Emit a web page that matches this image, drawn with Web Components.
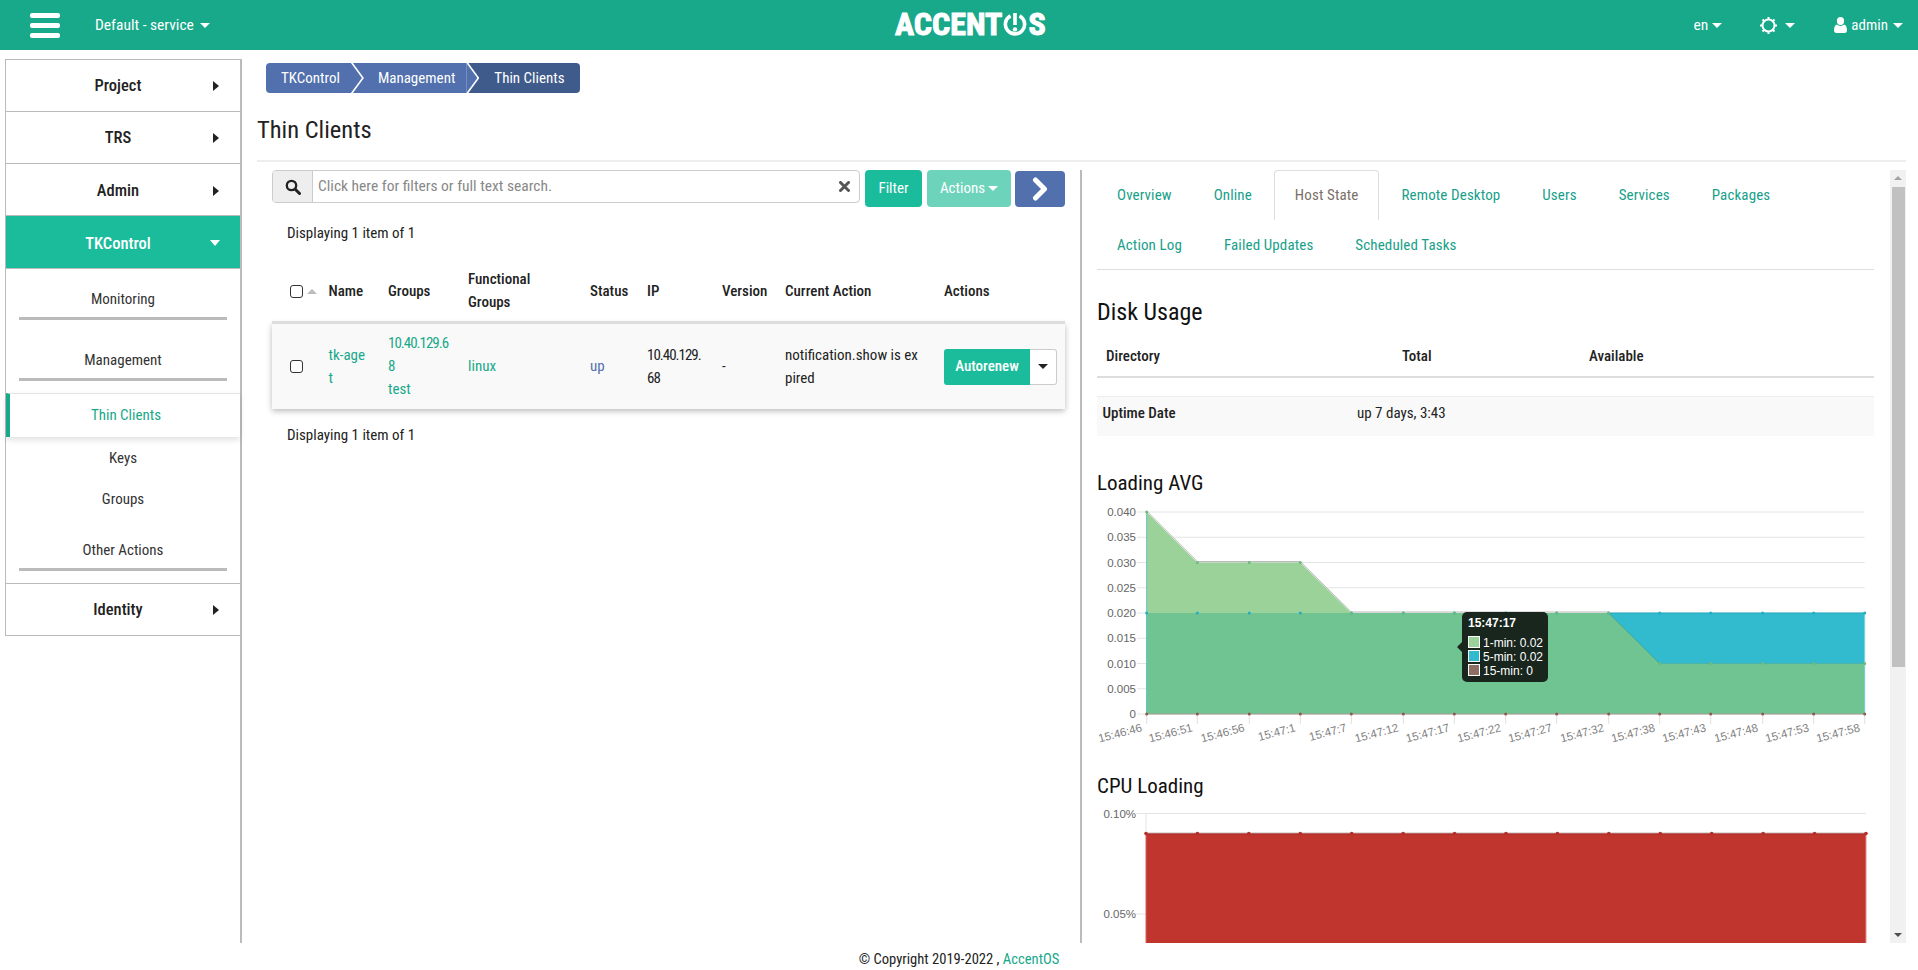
<!doctype html>
<html lang="en"><head><meta charset="utf-8"><title>Thin Clients</title>
<style>
html,body{margin:0;padding:0;height:970px;overflow:hidden;background:#fff}
body{font:15px/23px "Roboto Condensed","Liberation Sans",sans-serif;color:#222;display:flex;flex-direction:column}
</style></head>
<body>
<x-topbar></x-topbar>
<x-shell>
  <x-sidenav>
    <x-nav-item>Project</x-nav-item>
    <x-nav-item>TRS</x-nav-item>
    <x-nav-item low>Admin</x-nav-item>
    <x-nav-item low open>TKControl</x-nav-item>
    <x-nav-head>Monitoring</x-nav-head>
    <x-nav-head>Management</x-nav-head>
    <x-nav-link active>Thin Clients</x-nav-link>
    <x-nav-link h="42">Keys</x-nav-link>
    <x-nav-link h="41">Groups</x-nav-link>
    <x-nav-head>Other Actions</x-nav-head>
    <x-nav-item last>Identity</x-nav-item>
  </x-sidenav>
  <x-content>
    <x-breadcrumb>
      <x-crumb>TKControl</x-crumb><x-crumb mid>Management</x-crumb><x-crumb end>Thin Clients</x-crumb>
    </x-breadcrumb>
    <x-page-title>Thin Clients</x-page-title>
    <x-split>
      <x-left-panel>
        <x-toolbar></x-toolbar>
        <x-count>Displaying 1 item of 1</x-count>
        <x-clients-table></x-clients-table>
        <x-count after>Displaying 1 item of 1</x-count>
      </x-left-panel>
      <x-right-panel>
        <x-tabs></x-tabs>
        <x-disk-usage></x-disk-usage>
        <x-section-title>Loading AVG</x-section-title>
        <x-load-chart></x-load-chart>
        <x-section-title cpu>CPU Loading</x-section-title>
        <x-cpu-chart></x-cpu-chart>
      </x-right-panel>
      <x-scrolltrack></x-scrolltrack>
    </x-split>
  </x-content>
</x-shell>
<x-footer></x-footer>
<script>
const def=(name,html)=>customElements.define(name,class extends HTMLElement{constructor(){super();this.attachShadow({mode:'open'}).innerHTML=html}});
const caret=(c='#fff')=>`<i style="display:inline-block;width:0;height:0;border:5px solid transparent;border-top:5.5px solid ${c};border-bottom:0;vertical-align:middle"></i>`;

def('x-topbar',`<style>
:host{display:flex;align-items:center;height:50px;background:#18a88a;color:#fff;flex:none;position:relative}
.burger{margin-left:30px;width:30px;display:flex;flex-direction:column;gap:5px}
.burger b{display:block;height:5px;background:#fff;border-radius:2px}
.proj{margin-left:35px;display:flex;align-items:center;gap:6px;font-size:15.5px;width:auto}
.logo{position:absolute;left:895px;top:12px;height:24px;display:flex;align-items:center;font:700 32px/24px "Roboto Condensed",sans-serif;-webkit-text-stroke:1px #fff;color:#fff}
.logo svg{margin:0 1px 0 1px}
.right{margin-left:auto;display:flex;align-items:center;font-size:15.5px}
.en{display:flex;align-items:center;gap:4px}
.gear{display:flex;align-items:center;gap:8px;margin-left:37.7px}
.user{display:flex;align-items:center;margin-left:39.5px;margin-right:15px;font-size:15px}
.user svg{margin-right:4px}.user i{margin-left:5px}
</style>
<div class="burger"><b></b><b></b><b></b></div>
<div class="proj">Default - service ${caret()}</div>
<div class="logo">ACCENT<svg width="24" height="24" viewBox="0 0 24 24"><path d="M7.5 3.8A9.6 9.6 0 1 0 16.5 3.8" fill="none" stroke="#fff" stroke-width="3.6"/><rect x="10.2" y="1" width="3.6" height="12" fill="#fff"/><circle cx="12" cy="17.4" r="2.2" fill="#fff"/></svg>S</div>
<div class="right">
<div class="en">en${caret()}</div>
<div class="gear"><svg width="17" height="17" viewBox="0 0 17 17" fill="none" stroke="#fff"><circle cx="8.5" cy="8.5" r="6" stroke-width="2"/><g stroke-width="2"><path d="M8.5 0v2.5M8.5 14.5V17M0 8.5h2.5M14.5 8.5H17M2.5 2.5l1.8 1.8M12.7 12.7l1.8 1.8M14.5 2.5l-1.8 1.8M4.3 12.7l-1.8 1.8"/></g></svg>${caret()}</div>
<div class="user"><svg width="13" height="16" viewBox="0 0 13 16" fill="#fff"><ellipse cx="6.5" cy="4" rx="3.6" ry="4"/><path d="M0 13.2C0 10 1.2 8 3 7.600C4 8.600 5.200 9 6.500 9S9 8.600 10 7.600C11.800 8 13 10 13 13.200 13 15 12 16 10.800 16H2.200C1 16 0 15 0 13.200Z"/></svg>admin${caret()}</div>
</div>`);

def('x-shell',`<style>:host{display:flex;height:893px;flex:none;overflow:hidden}</style><slot></slot>`);

def('x-sidenav',`<style>
:host{display:block;flex:none;width:237px;margin:9px 0 0 5px;box-sizing:border-box;border-right:2px solid #bbb}
.box{border-left:1px solid #bbb;border-top:1px solid #bbb;border-bottom:1px solid #bbb}
</style><div class="box"><slot></slot></div>`);

customElements.define('x-nav-item',class extends HTMLElement{constructor(){super();
 const open=this.hasAttribute('open'),last=this.hasAttribute('last'),low=this.hasAttribute('low');
 this.attachShadow({mode:'open'}).innerHTML=`<style>
 :host{display:grid;height:${open?53:52}px;box-sizing:border-box;${last?'margin-top:2px;border-top:1px solid #bbb;':'border-bottom:1px solid #bbb;'}align-items:center;padding-right:10px;${low?'padding-top:2px;':''}
  font-size:16.5px;font-weight:500;color:${open?'#fff':'#222'};background:${open?'#1abc9c':'#fff'}}
 span{grid-area:1/1;justify-self:center}
 i{grid-area:1/1;justify-self:end;width:0;height:0;border:solid transparent;
  ${open?'border-width:6px 5px 0;border-top-color:#fff;margin-right:10px':'border-width:5px 0 5px 6px;border-left-color:#222;margin-right:11px'}}
 </style><span><slot></slot></span><i></i>`}});

def('x-nav-head',`<style>
:host{display:block;padding-top:19px;height:42px;text-align:center;color:#333;font-size:15px;line-height:22px}
hr{margin:7px 13px 0;border:0;height:3px;background:#bbb}
</style><slot></slot><hr>`);

customElements.define('x-nav-link',class extends HTMLElement{constructor(){super();
 const a=this.hasAttribute('active'),h=this.getAttribute('h')||41;
 this.attachShadow({mode:'open'}).innerHTML=`<style>
 :host{display:flex;align-items:center;justify-content:center;text-align:center;font-size:15px;box-sizing:border-box;
 ${a?`height:44px;margin-top:2px;padding-left:2px;border-left:4px solid #18a88a;border-top:1px solid #e4e4e4;color:#18a88a;box-shadow:0 3px 6px rgba(0,0,0,.12);background:#fff;position:relative`:`height:${h}px;color:#333`}}
 </style><slot></slot>`}});

def('x-content',`<style>:host{display:flex;flex-direction:column;flex:1;min-width:0;padding:0 12px 0 15px;box-sizing:border-box}</style><slot></slot>`);

def('x-breadcrumb',`<style>:host{display:flex;margin:13px 0 0 9px;height:30px;flex:none}</style><slot></slot>`);
customElements.define('x-crumb',class extends HTMLElement{constructor(){super();
 const mid=this.hasAttribute('mid'),end=this.hasAttribute('end');
 const bg=end?'#3f5b8b':'#5170ad';
 this.attachShadow({mode:'open'}).innerHTML=`<style>
 :host{display:block;position:relative;height:30px;line-height:30px;color:#fff;font-size:15px;background:${bg};
  z-index:${end?1:mid?2:3};
  ${end?'padding:0 15px 0 28px;border-radius:0 4px 4px 0':mid?'padding:0 11px 0 27px':'padding:0 11px 0 15px;border-radius:4px 0 0 4px'}}
 ${end?'':`:host::before{content:"";position:absolute;top:0;left:100%;width:13px;height:30px;background:#fff;clip-path:polygon(0 0,2px 0,100% 50%,2px 100%,0 100%)}
 :host::after{content:"";position:absolute;top:0;left:100%;width:11px;height:30px;background:${bg};clip-path:polygon(0 0,100% 50%,0 100%)}`}
 </style><slot></slot>`}});

def('x-page-title',`<style>:host{display:block;flex:none;margin-top:23px;height:44px;border-bottom:2px solid #eee;font-size:24.5px;line-height:28px}</style><slot></slot>`);

def('x-split',`<style>:host{display:flex;flex:none;height:773px;margin-top:8px;overflow:hidden}</style><slot></slot>`);

def('x-left-panel',`<style>:host{display:block;flex:none;width:825px;box-sizing:border-box;padding-left:15px;border-right:2px solid #bbb}</style><slot></slot>`);

def('x-toolbar',`<style>
:host{display:flex;align-items:flex-start;width:793px}
.search{display:flex;width:588px;height:33px;box-sizing:border-box;border:1px solid #ccc;border-radius:4px;background:#fff;overflow:hidden}
.ic{width:39px;background:#eee;border-right:1px solid #ccc;display:flex;align-items:center;justify-content:center;flex:none}
.ph{flex:1;color:#888;font-size:15.500px;line-height:31px;padding-left:5px}
.x{display:flex;align-items:center;margin-right:9px}
button{all:unset;box-sizing:border-box;height:37px;border-radius:4px;color:#fff;font-size:15px;display:flex;align-items:center;justify-content:center}
.f{width:57px;margin-left:5px;background:#1abc9c}
.a{width:84px;margin-left:5px;background:#6dd4bb;gap:3px}
.n{width:50px;margin-left:4px;background:#5170ad;margin-top:1px;height:36px}
</style>
<div class="search"><div class="ic"><svg width="16" height="16" viewBox="0 0 16 16" fill="none" stroke="#222"><circle cx="6.500" cy="6.500" r="4.700" stroke-width="2.300"/><path d="M10 10l4.500 4.500" stroke-width="3" stroke-linecap="round"/></svg></div><div class="ph">Click here for filters or full text search.</div><div class="x"><svg width="11" height="11" viewBox="0 0 11 11"><path d="M1.500 1.500l8 8M9.500 1.500l-8 8" stroke="#555" stroke-width="3" stroke-linecap="round"/></svg></div></div>
<button class="f">Filter</button><button class="a">Actions ${caret()}</button>
<button class="n"><svg width="16" height="24" viewBox="0 0 16 24"><path d="M3.500 3l9 9-9 9" fill="none" stroke="#fff" stroke-width="5" stroke-linejoin="round" stroke-linecap="round"/></svg></button>`);

customElements.define('x-count',class extends HTMLElement{constructor(){super();
 this.attachShadow({mode:'open'}).innerHTML=`<style>:host{display:block;margin:15px 0 16px 15px;line-height:22px;color:#222}</style><slot></slot>`}});

def('x-clients-table',`<style>
:host{display:block;width:793px}
table{border-collapse:collapse;table-layout:fixed;width:793px}
th,td{padding:8px;text-align:left;vertical-align:middle;line-height:23px;font-size:15px;word-break:break-all}
th{font-weight:500;word-break:normal;color:#222;padding-bottom:7px}
thead tr{border-bottom:3px solid #ddd}
tbody tr{background:#f9f9f9;box-shadow:0 2px 6px rgba(0,0,0,.28)}
a{color:#18a88a}.up{color:#5170ad}.ip{letter-spacing:-1px}
.box{appearance:none;display:block;margin:0;width:13px;height:13px;border:1.500px solid #333;border-radius:3px;background:#fff;box-sizing:border-box}
.hc{display:flex;align-items:center;gap:4px;padding-left:10px}
.sort{width:0;height:0;border:5px solid transparent;border-bottom:5px solid #bbb;border-top:0}
.btn{display:flex;height:36px}
.auto{width:86px;background:#1abc9c;color:#fff;border-radius:3px 0 0 3px;display:flex;align-items:center;justify-content:center;font-weight:500}
.dd{width:27px;box-sizing:border-box;border:1px solid #ccc;border-left:0;border-radius:0 3px 3px 0;background:#fff;display:flex;align-items:center;justify-content:center}
</style>
<table><colgroup><col style="width:48.500px"><col style="width:59.500px"><col style="width:80px"><col style="width:122px"><col style="width:57px"><col style="width:75px"><col style="width:63px"><col style="width:159px"><col style="width:129px"></colgroup>
<thead><tr><th style="padding:8px 0 7px"><div class="hc"><input class="box" type="checkbox" style="margin-left:8px"><span class="sort"></span></div></th><th>Name</th><th>Groups</th><th>Functional Groups</th><th>Status</th><th>IP</th><th>Version</th><th>Current Action</th><th>Actions</th></tr></thead>
<tbody><tr><td style="padding:8px 0 8px 18px"><input class="box" type="checkbox"></td><td style="padding-right:13px"><a>tk-aget</a></td><td><a class="ip">10.40.129.68</a><br><a>test</a></td><td><a>linux</a></td><td><span class="up">up</span></td><td class="ip">10.40.129.68</td><td>-</td><td style="padding-right:13px">notification.show is expired</td><td style="padding-right:0"><div class="btn"><div class="auto">Autorenew</div><div class="dd">${caret('#222')}</div></div></td></tr></tbody></table>`);

def('x-right-panel',`<style>:host{display:block;flex:none;width:808px;box-sizing:border-box;padding-left:15px;height:773px;overflow:hidden}</style><slot></slot>`);

def('x-tabs',`<style>
:host{display:flex;flex-wrap:wrap;width:777px;height:99px;border-bottom:1px solid #ddd;box-sizing:content-box;font-size:15px;letter-spacing:.12px}
span{display:flex;align-items:center;height:50px;padding:0 20px;margin-right:2px;color:#18a08a;box-sizing:border-box;white-space:nowrap}
.on{color:#7a6f68;border:1px solid #ddd;border-bottom:0;border-radius:4px 4px 0 0;margin-right:2px}
.br{flex-basis:100%;height:0;padding:0;margin:0}
</style><span>Overview</span><span>Online</span><span class="on">Host State</span><span>Remote Desktop</span><span>Users</span><span>Services</span><span>Packages</span><span class="br"></span><span>Action Log</span><span>Failed Updates</span><span>Scheduled Tasks</span>`);

def('x-disk-usage',`<style>
:host{display:block;width:777px}
h2{margin:27px 0 0;font-weight:400;font-size:24px;line-height:30px;color:#111}
.head{display:grid;grid-template-columns:296px 187px 1fr;padding-left:9px;height:32px;padding-bottom:4px;margin-top:13px;align-items:center;font-weight:500;border-bottom:2px solid #ddd}
.row{display:grid;grid-template-columns:254.500px 1fr;padding-left:5.500px;height:40px;padding-bottom:6px;margin-top:18px;align-items:center;background:#f9f9f9;border-top:1px solid #eee;box-sizing:border-box}
b{font-weight:500}
</style><h2>Disk Usage</h2><div class="head"><span>Directory</span><span>Total</span><span>Available</span></div>
<div class="row"><b>Uptime Date</b><span>up 7 days, 3:43</span></div>`);

customElements.define('x-section-title',class extends HTMLElement{constructor(){super();
 const c=this.hasAttribute('cpu');
 this.attachShadow({mode:'open'}).innerHTML=`<style>:host{display:block;margin-top:${c?'0':'34px'};height:26px;font-size:21px;line-height:26px;color:#111}</style><slot></slot>`}});

/* chart helpers: all coordinates are chart-local pixels; X0/Y0 = page position of the svg */
const X0=1097,Y0=496;
const xs=[1146.7,1197.3,1249.3,1300.3,1351.3,1403.3,1454.3,1505.7,1556.7,1608.7,1659.7,1710.7,1762.7,1813.7,1864.7].map(x=>x-X0);
const lbls=['15:46:46','15:46:51','15:46:56','15:47:1','15:47:7','15:47:12','15:47:17','15:47:22','15:47:27','15:47:32','15:47:38','15:47:43','15:47:48','15:47:53','15:47:58'];
const F='font-family="Liberation Sans,Arial,sans-serif" font-size="11.500"';

customElements.define('x-load-chart',class extends HTMLElement{constructor(){super();
 const Y=v=>714-Y0-v*5050;
 const a1=[.04,.03,.03,.03,.02,.02,.02,.02,.02,.02,.01,.01,.01,.01,.01],a5=xs.map(()=>.02);
 const pts=(arr)=>arr.map((v,i)=>xs[i].toFixed(1)+','+Y(v).toFixed(1)).join(' ');
 const base=`${xs[14]},${Y(0)} ${xs[0]},${Y(0)}`;
 let g='';
 ['0.040','0.035','0.030','0.025','0.020','0.015','0.010','0.005','0'].forEach((t,i)=>{const y=Y(.04-i*.005);
  g+=`<line x1="40" x2="${xs[14]}" y1="${y}" y2="${y}" stroke="#e4e4e4" stroke-width="1"/><text x="39" y="${y+4}" text-anchor="end" fill="#666" ${F}>${t}</text>`;});
 let tk='';
 xs.forEach((x,i)=>{tk+=`<line x1="${x}" x2="${x}" y1="${Y(0)}" y2="${Y(0)+10}" stroke="#e0e0e0"/><text transform="translate(${x-4} ${Y(0)+17}) rotate(-15)" text-anchor="end" fill="#808080" ${F}>${lbls[i]}</text>`;});
 const dots=(arr,c)=>arr.map((v,i)=>`<circle cx="${xs[i]}" cy="${Y(v)}" r="1.500" fill="${c}"/>`).join('');
 const tx=1462-X0,ty=612-Y0;
 const sw=(y,c,t)=>`<rect x="${tx+6.500}" y="${y}" width="11" height="11" fill="${c}" stroke="#fff"/><text x="${tx+21}" y="${y+10}" fill="#fff" font-family="Liberation Sans,Arial,sans-serif" font-size="12">${t}</text>`;
 this.attachShadow({mode:'open'}).innerHTML=`<style>:host{display:block;height:277px}svg{display:block}</style>
 <svg width="777" height="277" viewBox="0 0 777 277">${g}
 <polyline points="${pts(a1)}" fill="none" stroke="#bbb" stroke-width="1" transform="translate(0 -1)"/>
 <polygon points="${pts(a1)} ${base}" fill="#9ad29a"/>
 <polygon points="${pts(a5)} ${base}" fill="#32bace"/>
 <polygon points="${pts(a1.map(v=>Math.min(v,.02)))} ${base}" fill="#70c491"/>
 <line x1="${xs[9]}" y1="${Y(.02)}" x2="${xs[10]}" y2="${Y(.01)}" stroke="#3aa9a0" stroke-width="1"/>
 <line x1="${xs[10]}" y1="${Y(.01)}" x2="${xs[14]}" y2="${Y(.01)}" stroke="#4bb3a8" stroke-width="1"/>
 <line x1="${xs[9]}" y1="${Y(.02)}" x2="${xs[14]}" y2="${Y(.02)}" stroke="#26a9bd" stroke-width="1"/>
 <line x1="${xs[0]}" y1="${Y(.04)}" x2="${xs[0]}" y2="${Y(0)}" stroke="#5fc2b8"/>
 <line x1="${xs[14]}" y1="${Y(.02)}" x2="${xs[14]}" y2="${Y(0)}" stroke="#7fd0d8"/>
 <line x1="${xs[0]}" y1="${Y(0)}" x2="${xs[14]}" y2="${Y(0)}" stroke="#a39a90"/>
 ${tk}${dots(a5,'#1fb0c2')}${dots(a1,'#6fba7c')}${dots(xs.map(()=>0),'#8d5a4e')}
 <path d="M${tx} ${ty+30}l-5 5 5 5z" fill="#18261e"/>
 <rect x="${tx}" y="${ty}" width="86" height="70" rx="5" fill="#18261e"/>
 <text x="${tx+6}" y="${ty+15}" fill="#fff" font-family="Liberation Sans,Arial,sans-serif" font-size="12" font-weight="700">15:47:17</text>
 ${sw(ty+24.500,'#9ad29a','1-min: 0.02')}${sw(ty+38.500,'#32bace','5-min: 0.02')}${sw(ty+52.500,'#8d6e63','15-min: 0')}
 </svg>`}});

customElements.define('x-cpu-chart',class extends HTMLElement{constructor(){super();
 const top=834-800,y1=813.500-800,y2=914-800;
 const x0=1146-X0,x1=1866-X0;
 const dx=(x1-x0)/14;
 let d='';for(let i=0;i<15;i++)d+=`<circle cx="${x0+dx*i}" cy="${top-.5}" r="1.800" fill="#b3302a"/>`;
 this.attachShadow({mode:'open'}).innerHTML=`<style>:host{display:block;height:143px;margin-top:1px;overflow:hidden}svg{display:block}</style>
 <svg width="777" height="143" viewBox="0 0 777 143">
 <line x1="39" x2="${x1}" y1="${y1}" y2="${y1}" stroke="#e4e4e4"/>
 <line x1="${x0}" x2="${x0}" y1="${y1}" y2="${top}" stroke="#e4e4e4"/>
 <line x1="39" x2="${x0}" y1="${y2}" y2="${y2}" stroke="#e4e4e4"/>
 <text x="39" y="${y1+4}" text-anchor="end" fill="#666" ${F}>0.10%</text>
 <text x="39" y="${y2+4}" text-anchor="end" fill="#666" ${F}>0.05%</text>
 <line x1="${x0}" x2="${x1}" y1="${top-1.500}" y2="${top-1.500}" stroke="#ddd"/>
 <rect x="${x0}" y="${top}" width="${x1-x0}" height="120" fill="#c1352f"/>
 <line x1="${x0}" x2="${x1}" y1="${top}" y2="${top}" stroke="#ad2f29" stroke-width="1.500"/>
 <line x1="${x0}" x2="${x0}" y1="${top}" y2="143" stroke="#d9605a"/><line x1="${x1}" x2="${x1}" y1="${top}" y2="143" stroke="#e68a85"/>
 ${d}</svg>`}});

def('x-scrolltrack',`<style>
:host{display:flex;flex-direction:column;align-items:center;flex:none;width:16px;height:773px;background:#f1f1f1}
.up{margin-top:6px;width:0;height:0;border:4px solid transparent;border-top:0;border-bottom:4px solid #a3a3a3}
.th{margin-top:7px;width:13px;height:480px;background:#c1c1c1}
.dn{margin-top:auto;margin-bottom:6px;width:0;height:0;border:4px solid transparent;border-bottom:0;border-top:4px solid #505050}
</style><div class="up"></div><div class="th"></div><div class="dn"></div>`);

def('x-footer',`<style>:host{display:block;height:27px;flex:none;text-align:center;line-height:33px;font-size:14.600px;color:#222}a{color:#18a88a}</style>© Copyright 2019-2022 , <a>AccentOS</a>`);
</script>
</body></html>
